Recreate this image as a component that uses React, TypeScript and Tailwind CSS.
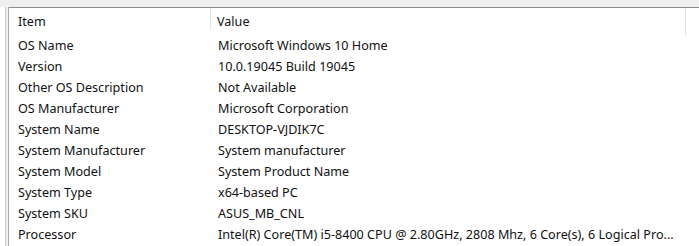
import React from 'react'

const rows: [string, string][] = [
  ['OS Name', 'Microsoft Windows 10 Home'],
  ['Version', '10.0.19045 Build 19045'],
  ['Other OS Description', 'Not Available'],
  ['OS Manufacturer', 'Microsoft Corporation'],
  ['System Name', 'DESKTOP-VJDIK7C'],
  ['System Manufacturer', 'System manufacturer'],
  ['System Model', 'System Product Name'],
  ['System Type', 'x64-based PC'],
  ['System SKU', 'ASUS_MB_CNL'],
  ['Processor', 'Intel(R) Core(TM) i5-8400 CPU @ 2.80GHz, 2808 Mhz, 6 Core(s), 6 Logical Pro...'],
]

export default function App() {
  return (
    <div
      className="w-[699px] h-[246px] overflow-hidden bg-white text-[12.6px] text-[#111] flex flex-col"
      style={{ fontFamily: '"Noto Sans", "Open Sans", sans-serif' }}
    >
      {/* window strip above the list */}
      <div className="h-[7px] shrink-0 bg-[#f0f0f0]" />
      <div className="flex flex-1 min-h-0">
        {/* splitter between the tree pane and the list */}
        <div className="w-[6px] shrink-0 bg-white border-r border-[#c8c8c8]" />
        <div className="w-[3px] shrink-0 bg-[#f0f0f0] border-r border-[#a8a8a8]" />
        <div className="flex-1 min-w-0 border-t border-[#8c8c8c] flex flex-col">
          {/* column headers */}
          <div className="h-[27px] shrink-0 flex items-stretch">
            <div className="w-[202px] shrink-0 pl-[9px] pt-[5px] border-r border-[#e5e5e5] mb-[5px]">
              Item
            </div>
            <div className="w-[475px] shrink-0 pl-[6px] pt-[5px] border-r border-[#e5e5e5] mb-[-1px]">
              Value
            </div>
          </div>
          {rows.map(([item, value]) => (
            <div key={item} className="h-[21px] shrink-0 pt-[2px] flex items-center whitespace-nowrap">
              <div className="w-[202px] shrink-0 pl-[9px]">{item}</div>
              <div className="pl-[7px]">{value}</div>
            </div>
          ))}
        </div>
      </div>
    </div>
  )
}
